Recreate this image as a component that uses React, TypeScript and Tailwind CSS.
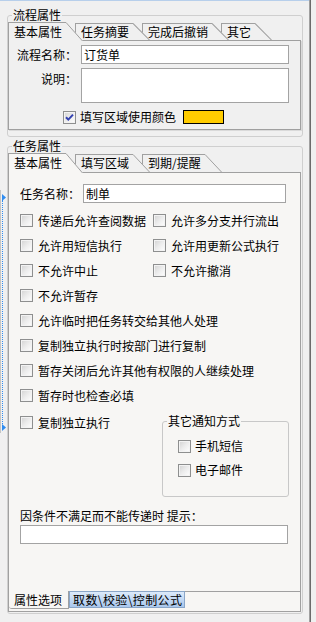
import React from 'react';

type TabProps = {
  label: string;
  active?: boolean;
  tall?: boolean;
  z: string;
  bg: string;
  fill: string;
};

function Tab({ label, active = false, tall = false, z, bg, fill }: TabProps) {
  const size = active
    ? tall
      ? 'h-[20px] leading-[18px]'
      : 'h-[19px] leading-[17px]'
    : tall
      ? 'mt-px h-[18px] leading-[16px]'
      : 'mt-px h-[17px] leading-[15px]';
  return (
    <div className={`relative mr-[9px] shrink-0 border-l border-t border-[#a0a0a0] pl-[5px] pr-[4px] ${size} ${bg} ${z}`}>
      {label}
      <svg
        className="absolute right-[-17px] top-[-1px] h-[calc(100%+1px)] w-[17px]"
        viewBox="0 0 17 20"
        preserveAspectRatio="none"
      >
        <path d="M0 0 L17 20 L0 20 Z" fill={fill} />
        <path d="M0 0.5 L16.5 20" stroke="#a0a0a0" strokeWidth="1" fill="none" vectorEffect="non-scaling-stroke" />
      </svg>
    </div>
  );
}

function Box({ checked = false }: { checked?: boolean }) {
  return (
    <span className="flex h-[13px] w-[13px] shrink-0 items-center justify-center border border-[#8e8f8f] bg-linear-to-br from-[#d2d2d2] via-[#ececec] to-[#ffffff] shadow-[inset_0_0_0_1px_#f3f3f3]">
      {checked && (
        <svg width="11" height="11" viewBox="0 0 11 11">
          <path d="M2 5.2 L4.3 7.6 L9 2.6" stroke="#3341b0" strokeWidth="2" fill="none" />
        </svg>
      )}
    </span>
  );
}

function Check({ label, checked, className = '' }: { label: string; checked?: boolean; className?: string }) {
  return (
    <div className={`flex items-center gap-[5px] ${className}`}>
      <Box checked={checked} />
      <span className="whitespace-nowrap">{label}</span>
    </div>
  );
}

function Field({ text = '', className = '' }: { text?: string; className?: string }) {
  return (
    <div className={`border border-[#a3a3a3] bg-white px-[2px] leading-[17px] ${className}`}>{text}</div>
  );
}

export default function App() {
  return (
    <div className="relative flex h-[622px] w-[316px] overflow-hidden bg-[#f0f0f0] font-['Noto_Sans_CJK_SC','Noto_Sans',sans-serif] text-[12px] leading-[14px] text-black">
      <div className="w-[309px] border-t border-[#b7cfeb]">
        {/* 流程属性 */}
        <fieldset className="ml-[7px] mt-[7px] w-[296px] rounded-[3px] border border-[#cfcfcf] pb-[6px]">
          <legend className="ml-[4px] px-px leading-[14px]">流程属性</legend>
          <div className="flex h-[18px] items-start">
            <Tab label="基本属性" active z="z-[4]" bg="bg-[#f0f0f0]" fill="#f0f0f0" />
            <Tab label="任务摘要" z="z-[3]" bg="bg-[#f0f0f0]" fill="#f0f0f0" />
            <Tab label="完成后撤销" z="z-[2]" bg="bg-[#f0f0f0]" fill="#f0f0f0" />
            <Tab label="其它" z="z-[1]" bg="bg-[#f0f0f0]" fill="#f0f0f0" />
          </div>
          <div className="h-[90px] w-[293px] border border-[#a0a0a0] bg-[#f0f0f0] shadow-[1px_1px_0_#dadada]">
            <div className="mt-[4px] flex items-center">
              <span className="w-[72px] pr-[4px] text-right">流程名称：</span>
              <Field text="订货单" className="h-[19px] w-[208px]" />
            </div>
            <div className="mt-[4px] flex items-start">
              <span className="w-[72px] pr-[4px] pt-[4px] text-right">说明：</span>
              <Field className="h-[35px] w-[208px]" />
            </div>
            <div className="ml-[54px] mt-[7px] flex items-center">
              <Check label="填写区域使用颜色" checked className="!gap-[4px]" />
              <span className="ml-[7px] h-[14px] w-[41px] border border-black bg-[#ffcc00]" />
            </div>
          </div>
        </fieldset>

        {/* 任务属性 */}
        <fieldset className="ml-[7px] mt-[2px] w-[296px] rounded-[3px] border border-[#cfcfcf] pb-px">
          <legend className="ml-[4px] px-px leading-[14px]">任务属性</legend>
          <div className="flex h-[19px] items-start">
            <Tab label="基本属性" active tall z="z-[4]" bg="bg-[#f7f6f4]" fill="#f7f6f4" />
            <Tab label="填写区域" tall z="z-[3]" bg="bg-[#f0f0f0]" fill="#f0f0f0" />
            <Tab label="到期/提醒" tall z="z-[2]" bg="bg-[#f0f0f0]" fill="#f0f0f0" />
          </div>
          <div className="h-[419px] w-[293px] border-x border-t border-[#a0a0a0] bg-[#f7f6f4]">
            <div className="mt-[11px] flex items-center gap-[3px] pl-[11px]">
              <span>任务名称：</span>
              <Field text="制单" className="h-[19px] w-[203px]" />
            </div>
            <div className="mt-[5px]">
              <div className="flex h-[25px] items-center pl-[11px]">
                <Check label="传递后允许查阅数据" className="w-[133px]" />
                <Check label="允许多分支并行流出" />
              </div>
              <div className="flex h-[25px] items-center pl-[11px]">
                <Check label="允许用短信执行" className="w-[133px]" />
                <Check label="允许用更新公式执行" />
              </div>
              <div className="flex h-[25px] items-center pl-[11px]">
                <Check label="不允许中止" className="w-[133px]" />
                <Check label="不允许撤消" />
              </div>
              <div className="flex h-[25px] items-center pl-[11px]">
                <Check label="不允许暂存" />
              </div>
              <div className="flex h-[25px] items-center pl-[11px]">
                <Check label="允许临时把任务转交给其他人处理" />
              </div>
              <div className="flex h-[25px] items-center pl-[11px]">
                <Check label="复制独立执行时按部门进行复制" />
              </div>
              <div className="flex h-[25px] items-center pl-[11px]">
                <Check label="暂存关闭后允许其他有权限的人继续处理" />
              </div>
              <div className="flex h-[25px] items-center pl-[11px]">
                <Check label="暂存时也检查必填" />
              </div>
            </div>
            <div className="mt-[2px] flex items-start">
              <div className="flex h-[25px] w-[153px] items-center pl-[11px]">
                <Check label="复制独立执行" />
              </div>
              <fieldset className="mt-[4px] w-[127px] rounded-[3px] border border-[#c8c8c8] pb-[14px] pt-[6px]">
                <legend className="ml-[4px] px-px leading-[14px]">其它通知方式</legend>
                <div className="flex h-[24px] items-center pl-[15px]">
                  <Check label="手机短信" className="!gap-[4px]" />
                </div>
                <div className="flex h-[24px] items-center pl-[15px]">
                  <Check label="电子邮件" className="!gap-[4px]" />
                </div>
              </fieldset>
            </div>
            <div className="mt-[12px] pl-[11px]">因条件不满足而不能传递时 提示：</div>
            <Field className="ml-[11px] mt-[2px] h-[19px] w-[268px]" />
          </div>
          <div className="flex h-[21px] w-[293px] items-start border-x border-b border-[#a0a0a0] bg-[#f7f6f4]">
            <div className="h-[18px] w-[60px] rounded-bl-[3px] border-b border-r border-[#a0a0a0] bg-[#f7f6f4] pl-[5px] leading-[17px]">
              属性选项
            </div>
            <div className="h-[17px] w-[116px] border border-[#8aa6c8] bg-linear-to-b from-[#dceafa] to-[#a9c7ed] pl-[3px] leading-[15px] tracking-[0.4px]">
              取数\校验\控制公式
            </div>
            <div className="flex-1 border-t border-[#a0a0a0]" />
          </div>
        </fieldset>
      </div>
      <div className="w-px bg-[#a0a0a0]" />
      <div className="w-px bg-[#6b6b6b]" />

      {/* splitter handle */}
      <div className="absolute left-0 top-[190px] h-[243px] w-[6px]">
        <div className="absolute left-0 top-0 h-full w-px bg-[#c4c4c4]" />
        <div className="absolute left-[2px] top-[10px] h-[226px] border-l border-dotted border-[#2f8cf0]" />
        <svg className="absolute left-[2px] top-[4px]" width="4" height="7" viewBox="0 0 4 7">
          <path d="M0 0 L4 3.5 L0 7 Z" fill="#2f8cf0" />
        </svg>
        <svg className="absolute left-[2px] top-[234px]" width="4" height="7" viewBox="0 0 4 7">
          <path d="M0 0 L4 3.5 L0 7 Z" fill="#2f8cf0" />
        </svg>
      </div>
    </div>
  );
}
